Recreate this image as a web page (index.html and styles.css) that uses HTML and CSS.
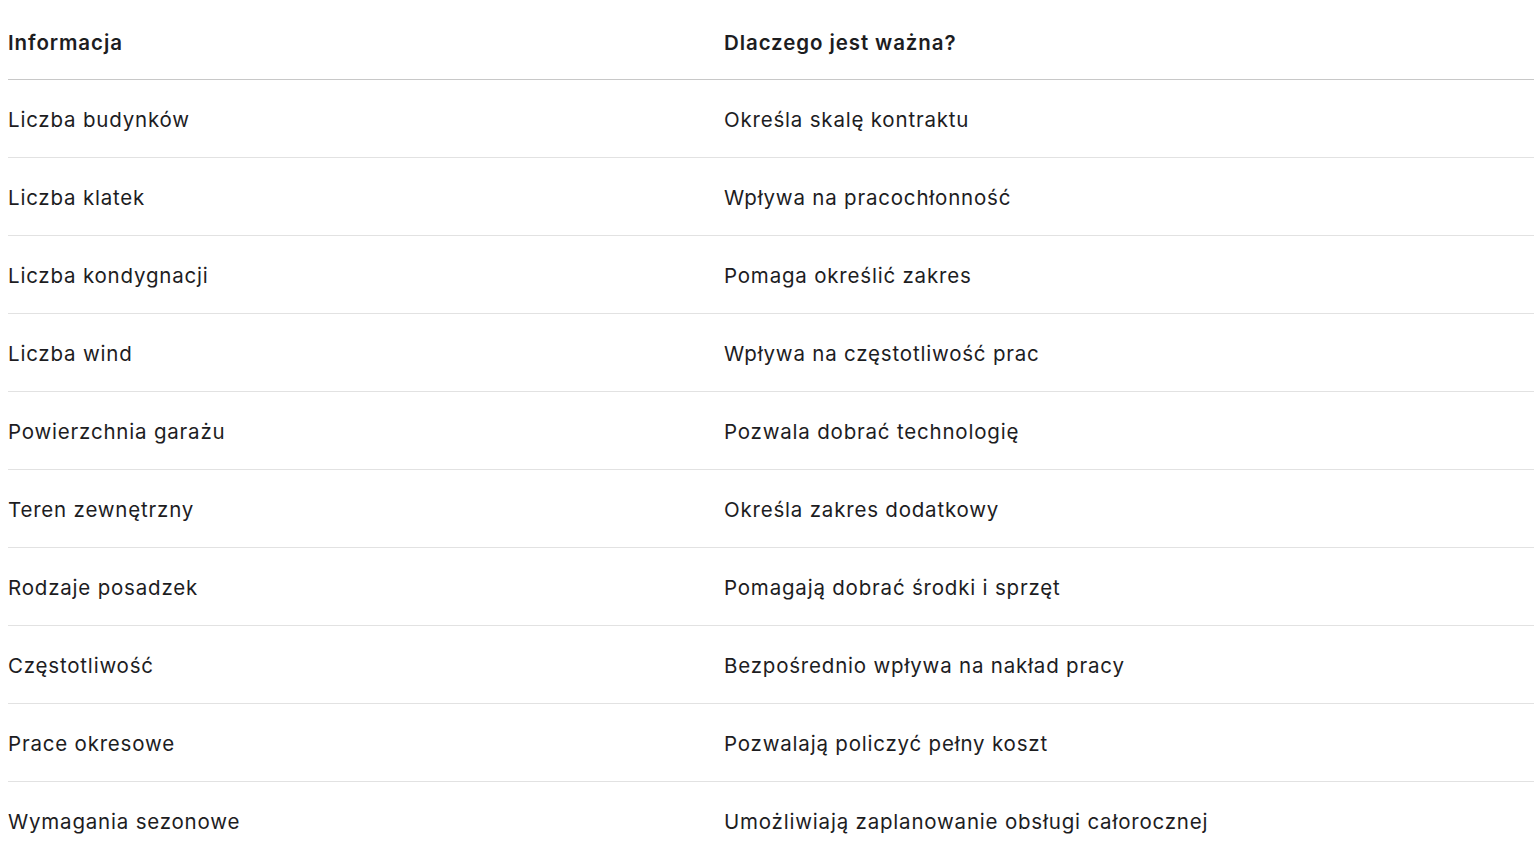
FILE: index.html
```html
<!DOCTYPE html>
<html lang="pl">
<head>
<meta charset="utf-8">
<title>Informacje</title>
<link rel="stylesheet" href="styles.css">
</head>
<body>
<table class="info-table">
  <colgroup>
    <col class="col-info">
    <col class="col-why">
  </colgroup>
  <thead>
    <tr>
      <th>Informacja</th>
      <th>Dlaczego jest ważna?</th>
    </tr>
  </thead>
  <tbody>
    <tr><td>Liczba budynków</td><td>Określa skalę kontraktu</td></tr>
    <tr><td>Liczba klatek</td><td>Wpływa na pracochłonność</td></tr>
    <tr><td>Liczba kondygnacji</td><td>Pomaga określić zakres</td></tr>
    <tr><td>Liczba wind</td><td>Wpływa na częstotliwość prac</td></tr>
    <tr><td>Powierzchnia garażu</td><td>Pozwala dobrać technologię</td></tr>
    <tr><td>Teren zewnętrzny</td><td>Określa zakres dodatkowy</td></tr>
    <tr><td>Rodzaje posadzek</td><td>Pomagają dobrać środki i sprzęt</td></tr>
    <tr><td>Częstotliwość</td><td>Bezpośrednio wpływa na nakład pracy</td></tr>
    <tr><td>Prace okresowe</td><td>Pozwalają policzyć pełny koszt</td></tr>
    <tr><td>Wymagania sezonowe</td><td>Umożliwiają zaplanowanie obsługi całorocznej</td></tr>
  </tbody>
</table>
</body>
</html>
```

FILE: styles.css
```css
html, body {
  margin: 0;
  padding: 0;
  background: #ffffff;
}

body {
  font-family: Inter, "Noto Sans", "Liberation Sans", sans-serif;
  color: #1d1d1f;
  overflow: hidden;
}

.info-table {
  margin-left: 8px;
  width: calc(100% - 8px);
  border-collapse: collapse;
  table-layout: fixed;
}

.col-info {
  width: 716px;
}

.info-table th,
.info-table td {
  text-align: left;
  font-size: 20.5px;
  line-height: 24px;
  letter-spacing: 0.8px;
  padding: 0;
  white-space: nowrap;
}

.info-table th {
  font-weight: 600;
  letter-spacing: 0.9px;
  padding-top: 31px;
  padding-bottom: 24px;
  border-bottom: 1px solid #c8c8c8;
}

.info-table td {
  font-weight: 400;
  padding-top: 28px;
  padding-bottom: 25px;
  border-bottom: 1px solid #e2e2e2;
}

.info-table tbody tr:last-child td {
  border-bottom: none;
}
```
